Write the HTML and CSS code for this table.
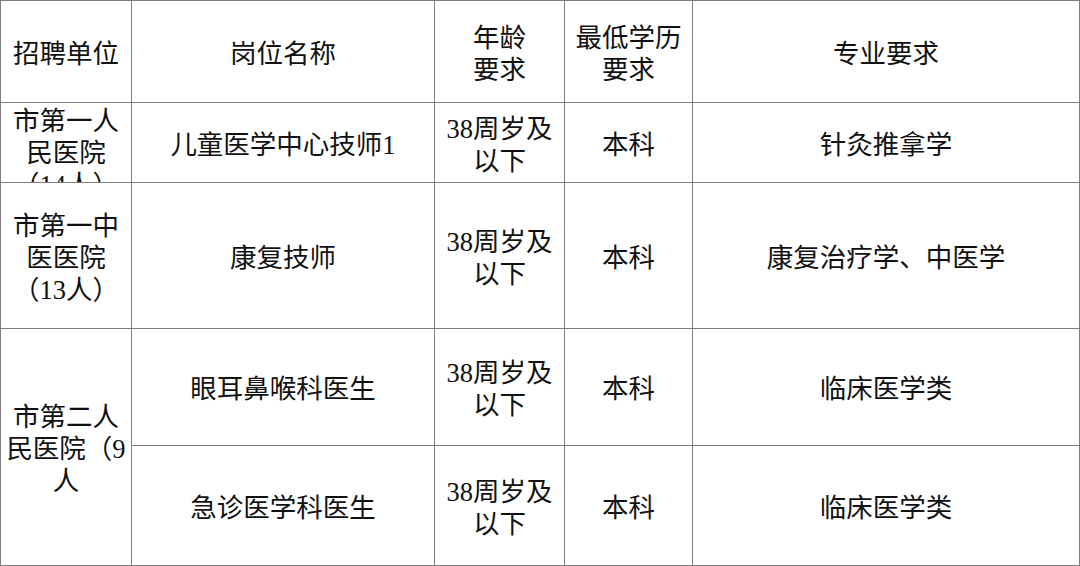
FILE: index.html
```html
<!DOCTYPE html>
<html lang="zh-CN">
<head>
<meta charset="utf-8">
<title>招聘岗位表</title>
<link rel="stylesheet" href="styles.css">
</head>
<body>
<div class="table">
  <div class="cell">招聘单位</div>
  <div class="cell">岗位名称</div>
  <div class="cell">年龄<br>要求</div>
  <div class="cell">最低学历<br>要求</div>
  <div class="cell">专业要求</div>

  <div class="cell top">市第一人<br>民医院<br>（14人）</div>
  <div class="cell">儿童医学中心技师1</div>
  <div class="cell">38周岁及<br>以下</div>
  <div class="cell">本科</div>
  <div class="cell">针灸推拿学</div>

  <div class="cell">市第一中<br>医医院<br>（13人）</div>
  <div class="cell">康复技师</div>
  <div class="cell">38周岁及<br>以下</div>
  <div class="cell">本科</div>
  <div class="cell">康复治疗学、中医学</div>

  <div class="cell span2">市第二人<br>民医院（9<br>人</div>
  <div class="cell">眼耳鼻喉科医生</div>
  <div class="cell">38周岁及<br>以下</div>
  <div class="cell">本科</div>
  <div class="cell">临床医学类</div>

  <div class="cell">急诊医学科医生</div>
  <div class="cell">38周岁及<br>以下</div>
  <div class="cell">本科</div>
  <div class="cell">临床医学类</div>
</div>
</body>
</html>
```

FILE: styles.css
```css
html, body {
  margin: 0;
  padding: 0;
  background: #ffffff;
}

body {
  width: 1080px;
  height: 566px;
  overflow: hidden;
}

.table {
  display: grid;
  grid-template-columns: 130px 302px 129px 127px 386px;
  grid-template-rows: 101px 79px 145px 116px 119px;
  gap: 1px;
  padding: 1px;
  background: #7d7d7d;
  width: 1080px;
  height: 566px;
  box-sizing: border-box;
  font-family: "Liberation Serif", "Noto Sans CJK SC", serif;
  font-size: 26.5px;
  line-height: 32px;
  color: #111111;
}

.cell {
  background: #ffffff;
  display: flex;
  align-items: center;
  justify-content: center;
  text-align: center;
  overflow: hidden;
  white-space: nowrap;
  padding-top: 4px;
  box-sizing: border-box;
}

.top {
  align-items: flex-start;
  padding-top: 2px;
}

.span2 {
  grid-row: span 2;
}
```
